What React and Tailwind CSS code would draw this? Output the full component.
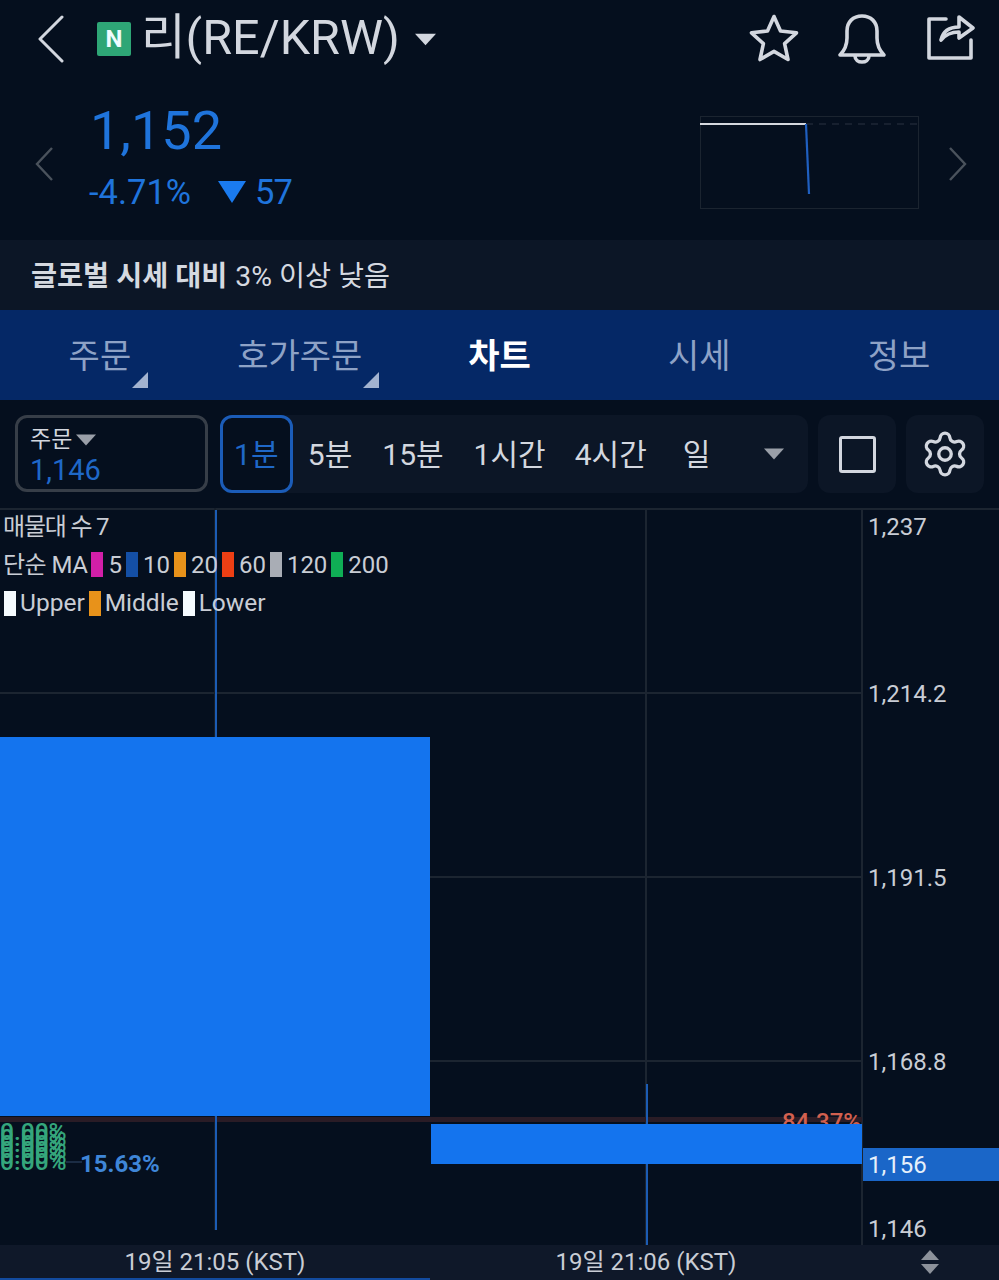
import { Settings } from 'lucide-react'

const fontStack = { fontFamily: 'Roboto, "Noto Sans CJK KR", sans-serif' }

const tabs = [
  { label: '주문', corner: true },
  { label: '호가주문', corner: true },
  { label: '차트', active: true },
  { label: '시세' },
  { label: '정보' },
]

const maLegend = [
  { color: 'bg-[#d21fa8]', label: '5' },
  { color: 'bg-[#144fa5]', label: '10' },
  { color: 'bg-[#e8921a]', label: '20' },
  { color: 'bg-[#ee3f14]', label: '60' },
  { color: 'bg-[#a9adb5]', label: '120' },
  { color: 'bg-[#0fae55]', label: '200' },
]

const bandLegend = [
  { color: 'bg-[#f5fbff]', label: 'Upper' },
  { color: 'bg-[#e8921a]', label: 'Middle' },
  { color: 'bg-[#f5fbff]', label: 'Lower' },
]

const priceTicks = [
  { label: '1,237', y: 'top-[3px]' },
  { label: '1,214.2', y: 'top-[170px]' },
  { label: '1,191.5', y: 'top-[354px]' },
  { label: '1,168.8', y: 'top-[538px]' },
  { label: '1,146', y: 'top-[705px]' },
]

function Swatch({ color }) {
  return <span className={`w-[12px] h-[25px] ${color}`} />
}

function Caret({ className }) {
  return (
    <svg viewBox="0 0 20 12" className={className} fill="currentColor">
      <path d="M0 0.5 H20 L10 11.5 Z" />
    </svg>
  )
}

function Header() {
  return (
    <div className="h-[240px] shrink-0 flex flex-col">
      {/* Title row */}
      <div className="h-[80px] shrink-0 flex items-center pl-[37px] pr-[24px] text-[#d3d7df]">
        <svg viewBox="0 0 28 48" className="w-[28px] h-[48px] mb-[3px]" fill="none" stroke="currentColor" strokeWidth="3" strokeLinecap="round" strokeLinejoin="round">
          <path d="M25 2 L3 24 L25 46" />
        </svg>
        <span className="ml-[32px] w-[34px] h-[34px] rounded-[2px] bg-[#2ea676] flex items-center justify-center text-[#eefcff] text-[24px] font-bold mb-[3px]">
          N
        </span>
        <span className="ml-[10px] text-[48.5px] leading-none mb-[3px] whitespace-nowrap">리(RE/KRW)</span>
        <Caret className="ml-[15px] w-[21px] h-[13px] mb-[2px]" />
        <div className="ml-auto flex items-center">
          <svg viewBox="0 0 50 48" className="w-[50px] h-[48px] mb-[5px]" fill="none" stroke="currentColor" strokeWidth="3.6" strokeLinejoin="round">
            <path d="M25 2.5 L31.5 17 L47.5 18.8 L35.6 29.6 L39 45.5 L25 37.4 L11 45.5 L14.4 29.6 L2.5 18.8 L18.5 17 Z" />
          </svg>
          <svg viewBox="0 0 50 50" className="ml-[38px] w-[50px] h-[50px] mb-[3px]" fill="none" stroke="currentColor" strokeWidth="3.6" strokeLinejoin="round">
            <path d="M3 41 C8 36 10 31 10 24 V17 C10 8 16 2 25 2 C34 2 40 8 40 17 V24 C40 31 42 36 47 41 Z" />
            <path d="M18 42 C18 50 32 50 32 42" />
          </svg>
          <svg viewBox="0 0 48 46" className="ml-[40px] w-[48px] h-[46px] mb-[7px]" fill="none" stroke="currentColor" strokeWidth="3.6" strokeLinecap="round" strokeLinejoin="round">
            <path d="M19 5 H2 V44 H44 V26" />
            <path d="M14 26 C16 17 23 13 32 13 V3 L46 14 L32 24 V18 C25 18 19 20 14 26 Z" />
          </svg>
        </div>
      </div>

      {/* Price row */}
      <div className="flex-1 flex items-start">
        <svg viewBox="0 0 20 36" className="w-[20px] h-[36px] ml-[34px] mt-[66px] text-[#4a525c]" fill="none" stroke="currentColor" strokeWidth="2.4">
          <path d="M18 2 L3 18 L18 34" />
        </svg>
        <div className="ml-[35px] mt-[16px] text-[#1f74dc]">
          <div className="text-[54px] leading-[70px] ml-[1px]">1,152</div>
          <div className="flex items-center mt-[5px] text-[34.5px] leading-[42px]">
            <span>-4.71%</span>
            <svg viewBox="0 0 28 22" className="w-[28px] h-[22px] ml-[27px] mr-[9px] text-[#1a7bf0]" fill="currentColor">
              <path d="M0 0 H28 L14 22 Z" />
            </svg>
            <span className="tracking-[-1px]">57</span>
          </div>
        </div>
        <svg viewBox="0 0 219 93" className="ml-auto mt-[36px] w-[219px] h-[93px]" fill="none">
          <rect x="0.5" y="0.5" width="218" height="92" stroke="#1b2430" />
          <path d="M106 8 H218" stroke="#2a3340" strokeWidth="1" strokeDasharray="7 6" />
          <path d="M0 8 H106" stroke="#d5d8de" strokeWidth="2" />
          <path d="M106 8 L109 78" stroke="#1f5fc0" strokeWidth="2.2" />
        </svg>
        <svg viewBox="0 0 20 36" className="w-[20px] h-[36px] ml-[29px] mr-[31px] mt-[66px] text-[#4a525c]" fill="none" stroke="currentColor" strokeWidth="2.4">
          <path d="M2 2 L17 18 L2 34" />
        </svg>
      </div>
    </div>
  )
}

function Tabs() {
  return (
    <div className="h-[90px] shrink-0 grid grid-cols-5 bg-[#052866]">
      {tabs.map((tab) => (
        <div
          key={tab.label}
          className={`flex items-center justify-center pt-[2px] text-[34px] ${tab.active ? 'font-bold text-white' : 'text-[#8ea2c6]'}`}
        >
          <span className="relative leading-none">
            {tab.label}
            {tab.corner && (
              <svg viewBox="0 0 16 16" className="absolute -right-[17px] top-[33px] w-[16px] h-[16px] text-[#a3b3d0]" fill="currentColor">
                <path d="M16 0 V16 H0 Z" />
              </svg>
            )}
          </span>
        </div>
      ))}
    </div>
  )
}

function Toolbar() {
  return (
    <div className="h-[108px] shrink-0 flex items-start pt-[15px] pl-[15px] pr-[15px]">
      <div className="w-[193px] h-[77px] rounded-[12px] border-[3px] border-[#373e48] pl-[12px] pt-[7px]">
        <div className="flex items-center text-[23px] leading-[29px] text-[#d3d7df]">
          주문
          <Caret className="ml-[4px] w-[20px] h-[12px] text-[#9a9fa8]" />
        </div>
        <div className="text-[29px] leading-[33px] text-[#1f68c8]">1,146</div>
      </div>
      <div className="ml-[12px] w-[589px] h-[78px] flex items-center rounded-[12px] bg-[#0c1626] text-[30px] text-[#d3d7df]">
        <div className="w-[73px] h-[78px] shrink-0 rounded-[12px] border-[3px] border-[#1b5cb8] bg-[#050f1e] flex items-center justify-center text-[#1f68c8]">
          1분
        </div>
        <span className="ml-[15px]">5분</span>
        <span className="ml-[30px]">15분</span>
        <span className="ml-[30px]">1시간</span>
        <span className="ml-[29px]">4시간</span>
        <span className="ml-[36px]">일</span>
        <Caret className="ml-[54px] w-[20px] h-[12px] text-[#9a9fa8]" />
      </div>
      <div className="ml-[10px] w-[78px] h-[78px] rounded-[12px] bg-[#0c1626] flex items-center justify-center">
        <div className="w-[37px] h-[37px] rounded-[3px] border-[3px] border-[#d3d7df]" />
      </div>
      <div className="ml-[10px] w-[78px] h-[78px] rounded-[12px] bg-[#0c1626] flex items-center justify-center">
        <Settings size={50} strokeWidth={1.6} className="text-[#d3d7df]" />
      </div>
    </div>
  )
}

function Chart() {
  return (
    <div className="relative flex-1 overflow-hidden text-[24px] text-[#c9cdd5]">
      {/* grid */}
      <div className="absolute left-0 top-0 w-full h-[2px] bg-[#1c2531]" />
      <div className="absolute left-0 top-[184px] w-[862px] h-[2px] bg-[#1c2531]" />
      <div className="absolute left-0 top-[368px] w-[862px] h-[2px] bg-[#1c2531]" />
      <div className="absolute left-0 top-[552px] w-[862px] h-[2px] bg-[#1c2531]" />
      <div className="absolute left-[645px] top-0 w-[2px] h-full bg-[#1c2531]" />
      <div className="absolute left-[214px] top-0 w-[2px] h-[722px] bg-[#161f2b]" />
      <div className="absolute left-[861px] top-0 w-[2px] h-full bg-[#1c2531]" />

      {/* volume split */}
      <div className="absolute left-0 top-[609px] w-[862px] h-[5px] bg-[#2a1c26]" />
      <div className="absolute right-[138px] top-[600px] text-[24px] leading-[28px] font-medium text-[#d2604f]">84.37%</div>
      <div className="absolute left-[66px] top-[653px] w-[16px] h-[2px] bg-[#1b2c44]" />
      <div className="absolute left-[80px] top-[642px] text-[24px] leading-[28px] font-bold text-[#3f86d8]">15.63%</div>
      <div className="absolute left-0 top-[621px] w-[70px] text-[#35a67c] font-medium text-[24.5px] leading-[6px]">
        <div>0.00%</div>
        <div>0.00%</div>
        <div>0.00%</div>
        <div>0.00%</div>
        <div>0.00%</div>
        <div>0.00%</div>
      </div>

      {/* candles */}
      <div className="absolute left-[215px] top-[2px] w-[2px] h-[720px] bg-[#1c5cb4]" />
      <div className="absolute left-[646px] top-[576px] w-[2px] h-[161px] bg-[#1c5cb4]" />
      <div className="absolute left-0 top-[229px] w-[430px] h-[379px] bg-[#1474ee]" />
      <div className="absolute left-[431px] top-[616px] w-[431px] h-[40px] bg-[#1474ee]" />

      {/* legend */}
      <div className="absolute left-[4px] top-0 flex flex-col">
        <div className="h-[37px] flex items-center whitespace-nowrap tracking-[-1.2px] -ml-[1px]">매물대 수 7</div>
        <div className="h-[39px] flex items-center whitespace-nowrap">
          <span className="tracking-[-0.5px] -ml-[1px]">단순 MA</span>
          {maLegend.map((item) => (
            <span key={item.label} className="flex items-center">
              <span className="w-[4px]" />
              <Swatch color={item.color} />
              <span className="ml-[5px]">{item.label}</span>
            </span>
          ))}
        </div>
        <div className="h-[39px] flex items-center whitespace-nowrap gap-[4px] text-[24.5px]">
          {bandLegend.map((item) => (
            <span key={item.label} className="flex items-center gap-[4px]">
              <Swatch color={item.color} />
              {item.label}
            </span>
          ))}
        </div>
      </div>

      {/* price axis */}
      {priceTicks.map((tick) => (
        <div key={tick.label} className={`absolute left-[868px] leading-[32px] ${tick.y}`}>
          {tick.label}
        </div>
      ))}
      <div className="absolute left-[863px] right-0 top-[640px] h-[33px] bg-[#1a66c8] pl-[5px] leading-[35px] text-[#e6f0fb]">
        1,156
      </div>
    </div>
  )
}

function TimeAxis() {
  return (
    <div className="relative h-[35px] shrink-0 bg-[#0f1829] text-[24px] leading-[35px] text-[#c9cdd5]">
      <span className="absolute left-[215px] -translate-x-1/2 whitespace-nowrap">19일 21:05 (KST)</span>
      <span className="absolute left-[646px] -translate-x-1/2 whitespace-nowrap">19일 21:06 (KST)</span>
      <svg viewBox="0 0 18 24" className="absolute left-[921px] top-[5px] w-[18px] h-[24px] text-[#8d929b]" fill="currentColor">
        <path d="M9 0 L18 10 H0 Z" />
        <path d="M0 14 H18 L9 24 Z" />
      </svg>
      <div className="absolute left-0 bottom-0 w-[430px] h-[2px] bg-[#124a9e]" />
    </div>
  )
}

export default function App() {
  return (
    <div className="w-[999px] h-[1280px] flex flex-col overflow-hidden bg-[#050f1e]" style={fontStack}>
      <Header />
      <div className="h-[70px] shrink-0 flex items-center pl-[31px] pt-[4px] bg-[#0c1626] text-[28.3px] text-[#d5d9e0]">
        <span className="font-bold">글로벌 시세 대비</span>
        <span className="ml-[8px]">3% 이상 낮음</span>
      </div>
      <Tabs />
      <Toolbar />
      <Chart />
      <TimeAxis />
    </div>
  )
}
